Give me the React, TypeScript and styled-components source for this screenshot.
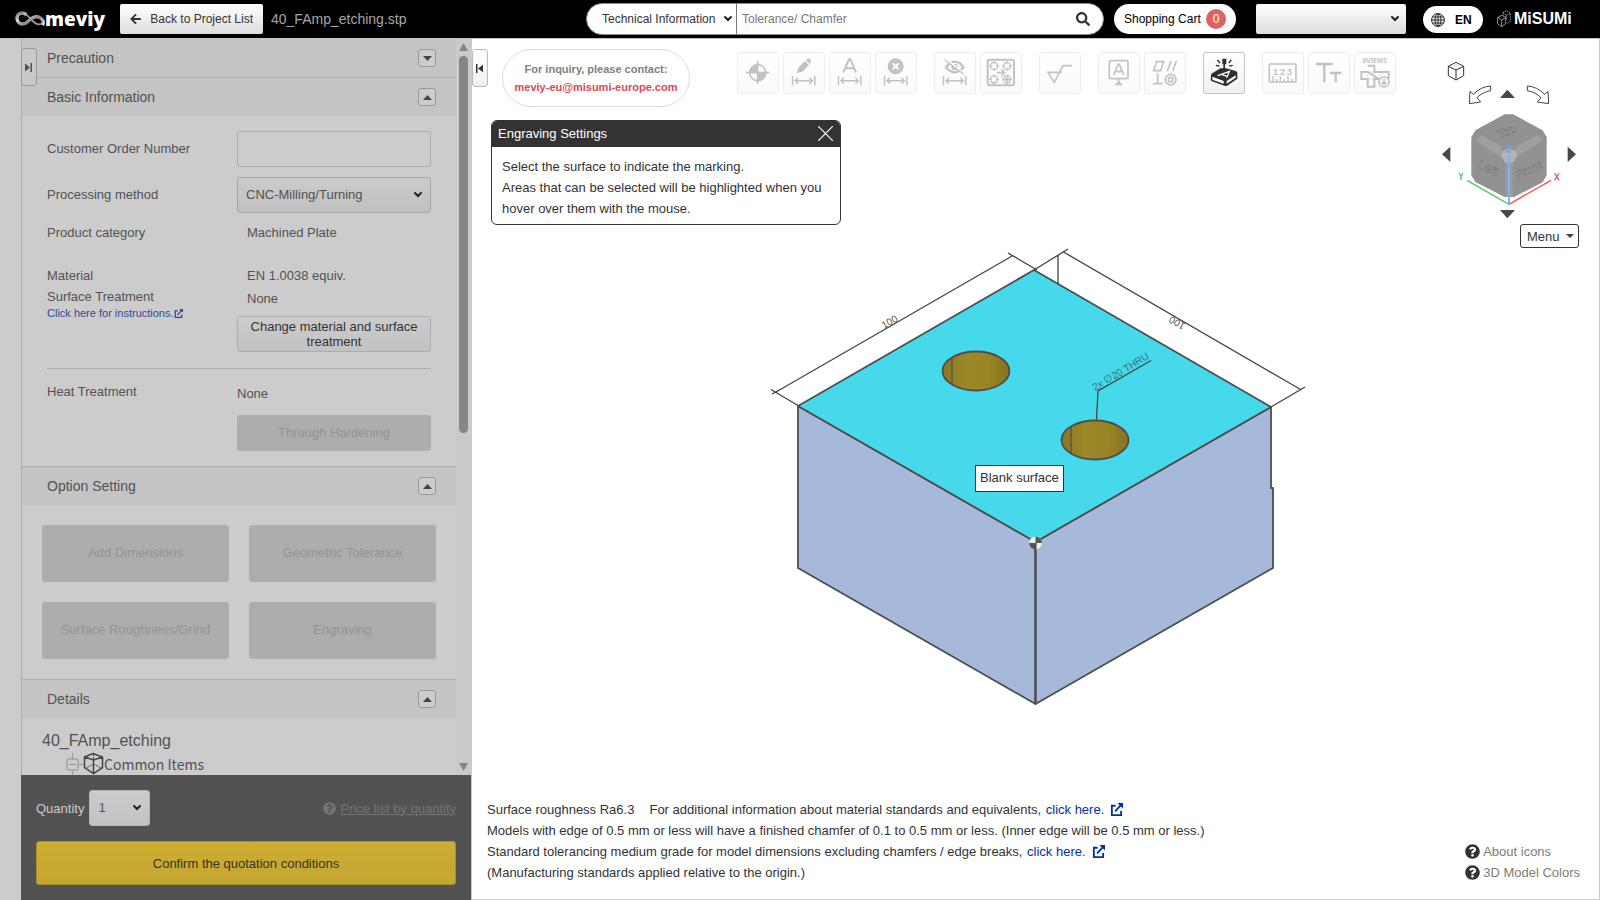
import React from "react";
import styled, { createGlobalStyle, css } from "styled-components";
import { FaSearch, FaArrowLeft, FaQuestionCircle } from "react-icons/fa";

const GlobalStyle = createGlobalStyle`
  *, *::before, *::after { box-sizing: border-box; }
  body {
    margin: 0;
    font: 13px/21px "Liberation Sans", Arial, sans-serif;
    color: #333;
    background: #fff;
  }
  button, input, select { font: inherit; color: inherit; margin: 0; }
  a { color: #003399; text-decoration: none; }
`;

/* ---------- shell ---------- */

const Shell = styled.div`
  display: flex;
  flex-direction: column;
  height: 100vh;
  min-width: 1400px;
`;

const Header = styled.header`
  display: flex;
  align-items: center;
  justify-content: space-between;
  height: 39px;
  flex: none;
  padding: 0 29px 0 15px;
  background: #000;
  border-bottom: 1px solid #c4c4c4;
  font-size: 12px;
`;

const HeaderGroup = styled.div`
  display: flex;
  align-items: center;
`;

const Brand = styled.a`
  display: flex;
  align-items: center;
  width: 105px;
  color: #fff;
  font: 800 19px/24px "Open Sans", sans-serif;
  svg { flex: none; }
`;

const BackButton = styled.button`
  display: flex;
  align-items: center;
  gap: 9px;
  width: 143px;
  height: 30px;
  padding: 0 10px;
  border: 0;
  border-radius: 2px;
  background: linear-gradient(#fff, #ddd);
  white-space: nowrap;
  svg { font-size: 12px; }
`;

const FileName = styled.span`
  margin-left: 8px;
  font-size: 14px;
  color: #a6a6a6;
`;

const SearchBox = styled.form`
  display: flex;
  width: 518px;
  height: 32px;
  margin-right: 10px;
  background: #fff;
  border: 1px solid #8a8a8a;
  border-radius: 16px;
  overflow: hidden;
`;

const SelectWrap = styled.span<{ $arrowRight: number }>`
  position: relative;
  display: inline-flex;
  > svg {
    position: absolute;
    right: ${(p) => p.$arrowRight}px;
    top: 50%;
    margin-top: -4px;
    pointer-events: none;
  }
`;

const SearchSelect = styled.select`
  appearance: none;
  width: 150px;
  padding: 0 0 0 15px;
  border: 0;
  border-right: 1px solid #777;
  background: transparent;
`;

const SearchInput = styled.input`
  flex: 1;
  min-width: 0;
  border: 0;
  padding: 0 5px;
  background: transparent;
  &::placeholder { color: #777; opacity: 1; }
`;

const SearchButton = styled.button`
  width: 40px;
  border: 0;
  padding: 0;
  background: transparent;
  svg { display: block; margin: 0 auto; font-size: 14px; }
`;

const CartButton = styled.button`
  display: flex;
  align-items: center;
  justify-content: space-between;
  width: 122px;
  height: 30px;
  padding: 0 10px;
  margin-right: 20px;
  border: 0;
  border-radius: 15px;
  background: #fff;
  color: #000;
  white-space: nowrap;
`;

const CartCount = styled.span`
  width: 20px;
  height: 20px;
  border-radius: 10px;
  background: #e06161;
  color: #fff;
  line-height: 20px;
  text-align: center;
`;

const AccountSelect = styled.select`
  appearance: none;
  width: 150px;
  height: 30px;
  border: 0;
  border-radius: 2px;
  background: linear-gradient(#fff, #ddd);
`;

const LanguageButton = styled.button`
  display: flex;
  align-items: center;
  gap: 10px;
  width: 60px;
  height: 27px;
  margin: 1px 14px 0 17px;
  padding: 1px 8px 0;
  border: 0;
  border-radius: 14px;
  background: #fff;
  color: #000;
  font-weight: bold;
`;

const Misumi = styled.a`
  display: flex;
  align-items: center;
  gap: 3px;
  width: 74px;
  color: #fff;
  font: bold 16px/20px "Liberation Sans", sans-serif;
  svg { flex: none; }
`;

const Body = styled.div`
  display: flex;
  flex: 1;
  min-height: 0;
`;

/* ---------- sidebar ---------- */

const Sidebar = styled.aside`
  display: flex;
  flex-direction: column;
  flex: 0 0 471px;
  padding-left: 21px;
  background: #ccc;
  color: #525252;
  position: relative;
`;

const ScrollRegion = styled.div`
  display: flex;
  flex: 1;
  min-height: 0;
  overflow: hidden;
  border-left: 1px solid #adadad;
`;

const Sections = styled.div`
  flex: 1;
  min-width: 0;
`;

const ScrollTrack = styled.div`
  display: flex;
  flex-direction: column;
  align-items: center;
  width: 15px;
  padding: 4px 0;
  background: #cacaca;
  svg { flex: none; }
`;

const ScrollThumb = styled.div`
  width: 9px;
  height: 377px;
  margin: 5px 0 auto;
  border-radius: 5px;
  background: #858585;
`;

const Section = styled.section`
  & + & { border-top: 1px solid #adadad; }
`;

const SectionHead = styled.h2`
  display: flex;
  align-items: center;
  justify-content: space-between;
  height: 38px;
  margin: 0;
  padding: 0 20px 0 25px;
  background: #c4c4c4;
  font-size: 14px;
  font-weight: normal;
`;

const Toggle = styled.button`
  width: 18px;
  height: 18px;
  padding: 0;
  border: 1px solid #999;
  border-radius: 3px;
  background: #ccc;
  svg { display: block; margin: 0 auto; }
`;

const Form = styled.div`
  padding: 15px 25px;
`;

const Row = styled.div<{ $h?: number; $top?: number }>`
  display: grid;
  grid-template-columns: 190px 1fr;
  align-items: ${(p) => (p.$h ? "center" : "start")};
  ${(p) => p.$h && css`min-height: ${p.$h}px;`}
  margin-top: ${(p) => p.$top ?? 0}px;
  label { padding-bottom: 2px; }
`;

const Stack = styled.div<{ $top?: number }>`
  display: flex;
  flex-direction: column;
  padding-top: ${(p) => p.$top ?? 0}px;
`;

const Value = styled.span<{ $indent?: boolean }>`
  line-height: 23px;
  padding-left: ${(p) => (p.$indent ? 10 : 0)}px;
`;

const HelpLink = styled.a`
  display: flex;
  align-items: center;
  font-size: 11px;
  line-height: 12px;
  color: #2f4b91;
`;

const TextInput = styled.input`
  width: 100%;
  height: 36px;
  padding: 0 9px;
  border: 1px solid #adadad;
  border-radius: 3px;
  background: #ccc;
`;

const MethodSelect = styled.select`
  appearance: none;
  width: 194px;
  height: 36px;
  padding: 0 8px 2px;
  border: 1px solid #a6a6a6;
  border-radius: 3px;
  background: linear-gradient(#cbcbcb, #c0c0c0);
`;

const PlainButton = styled.button`
  height: 36px;
  margin-top: 6px;
  padding: 0 10px;
  border: 1px solid #adadad;
  border-radius: 3px;
  background: linear-gradient(#ccc, #c2c2c2);
  color: #333;
  line-height: 15px;
`;

const Rule = styled.hr`
  height: 1px;
  margin: 16px 0 0;
  border: 0;
  background: #adadad;
`;

const OptionButton = styled.button<{ $h: number; $top?: number }>`
  height: ${(p) => p.$h}px;
  margin-top: ${(p) => p.$top ?? 0}px;
  padding: 0 0 2px;
  border: 0;
  border-radius: 3px;
  background: #adadad;
  color: #939393;
`;

const OptionGrid = styled.div`
  display: grid;
  grid-template-columns: 1fr 1fr;
  gap: 20px;
  padding: 20px;
`;

const Details = styled.div`
  padding: 12px 20px 0;
`;

const PartName = styled.div`
  font-size: 16px;
  line-height: 22px;
`;

const TreeRow = styled.div`
  display: flex;
  align-items: center;
  height: 24px;
  padding-left: 24px;
  font: 14px/24px "Noto Sans CJK JP", "Noto Sans", sans-serif;
`;

const QuoteBar = styled.div`
  flex: none;
  height: 125px;
  padding: 15px;
  background: #525252;
  color: #ccc;
`;

const QuoteRow = styled.div`
  display: flex;
  align-items: center;
  justify-content: space-between;
  margin-bottom: 15px;
`;

const QuantityLabel = styled.label`
  display: flex;
  align-items: center;
  gap: 5px;
`;

const QuantitySelect = styled.select`
  appearance: none;
  width: 61px;
  height: 36px;
  padding: 0 8px 2px;
  border: 1px solid #b5b5b5;
  border-radius: 3px;
  background: linear-gradient(#ccc, #c2c2c2);
  color: #525252;
`;

const PriceLink = styled.a`
  display: flex;
  align-items: center;
  gap: 4px;
  color: #757575;
  span { text-decoration: underline; }
`;

const ConfirmButton = styled.button`
  width: 100%;
  height: 44px;
  border: 1px solid #a8902c;
  border-radius: 3px;
  background: linear-gradient(#ccae33, #c4a632);
  color: #333;
`;

const PanelHandle = styled.button<{ $dim?: boolean }>`
  position: absolute;
  top: ${(p) => (p.$dim ? 9 : 10)}px;
  left: ${(p) => (p.$dim ? 21 : 0)}px;
  width: 16px;
  height: 38px;
  padding: 0;
  border: 1px solid ${(p) => (p.$dim ? "#999" : "#bbb")};
  border-radius: 3px;
  background: ${(p) => (p.$dim ? "#c8c8c8" : "linear-gradient(#fff, #f0f0f0)")};
  color: ${(p) => (p.$dim ? "#525252" : "#333")};
  svg { display: block; margin: 0 auto; }
`;

/* ---------- viewer ---------- */

const Viewer = styled.main`
  position: relative;
  display: flex;
  flex-direction: column;
  flex: 1;
  min-width: 0;
  border: 1px solid #ccc;
  border-top: 0;
`;

const Upper = styled.div`
  display: flex;
  justify-content: space-between;
  height: 206px;
  padding: 10px 20px 0 19px;
`;

const TopRow = styled.div`
  display: flex;
  align-items: flex-start;
  padding-left: 11px;
`;

const Inquiry = styled.div`
  width: 188px;
  height: 58px;
  margin-right: 47px;
  padding-top: 10px;
  border: 1px solid #ddd;
  border-radius: 29px;
  font: bold 11px/18px "Liberation Sans", sans-serif;
  text-align: center;
  white-space: nowrap;
  color: #808080;
  a { display: block; color: #d64b55; }
`;

const Toolbar = styled.div`
  display: flex;
  gap: 17px;
  padding-top: 3px;
`;

const ToolGroup = styled.div`
  display: flex;
  gap: 4px;
`;

const ToolButton = styled.button<{ $active?: boolean }>`
  width: 42px;
  height: 42px;
  padding: 0;
  border: 1px solid ${(p) => (p.$active ? "#c6c6c6" : "#eee")};
  border-radius: 3px;
  background: ${(p) => (p.$active ? "linear-gradient(#fff, #f0f0f0)" : "linear-gradient(#fff, #fafafa)")};
  color: ${(p) => (p.$active ? "#2e2e2e" : "#c2c2c2")};
  svg { display: block; }
`;

const Dialog = styled.section`
  width: 350px;
  margin-top: 13px;
  border: 1px solid #333;
  border-radius: 6px;
  background: #fff;
  overflow: hidden;
`;

const DialogHead = styled.div`
  display: flex;
  align-items: center;
  justify-content: space-between;
  height: 26px;
  padding: 0 7px 2px 6px;
  background: #333;
  color: #fff;
`;

const CloseButton = styled.button`
  width: 15px;
  height: 15px;
  padding: 0;
  border: 0;
  background: transparent;
  svg { display: block; }
`;

const DialogText = styled.p`
  margin: 0;
  padding: 9px 10px 5px;
`;

const ViewControls = styled.div`
  display: flex;
  flex-direction: column;
  align-items: flex-end;
  padding-top: 11px;
  > svg { display: block; flex: none; }
`;

const MenuButton = styled.button`
  display: flex;
  align-items: center;
  justify-content: space-between;
  width: 59px;
  height: 24px;
  margin-top: 4px;
  padding: 0 4px 0 6px;
  border: 1px solid #333;
  border-radius: 3px;
  background: #fff;
  flex: none;
`;

const Stage = styled.div`
  display: flex;
  justify-content: center;
  flex: 1;
  min-height: 0;
`;

const Model = styled.div`
  position: relative;
  width: 561px;
  height: 465px;
  svg { display: block; }
`;

const SurfaceTip = styled.div`
  position: absolute;
  left: 220px;
  top: 220px;
  height: 27px;
  padding: 1px 4px;
  border: 1px solid #333;
  background: #fff;
  white-space: nowrap;
`;

const Footer = styled.footer`
  display: flex;
  align-items: flex-end;
  justify-content: space-between;
  padding: 0 19px 16px 15px;
`;

const Note = styled.p`
  margin: 0;
  a { margin-left: 1px; }
  svg { margin-left: 6px; vertical-align: -2px; }
`;

const Lead = styled.span`
  margin-right: 15px;
`;

const LegendLink = styled.a`
  display: flex;
  align-items: center;
  gap: 3px;
  color: #7d7d75;
  svg { color: #333; font-size: 15px; }
`;

/* ---------- drawings ---------- */

const Chevron = () => (
  <svg width="10" height="8" viewBox="0 0 10 8" aria-hidden="true">
    <path d="M2 2 L5 5 L8 2" fill="none" stroke="#222" strokeWidth="2" strokeLinecap="round" />
  </svg>
);

const Triangle = ({ up, w = 9, h = 5, fill = "#444" }: { up?: boolean; w?: number; h?: number; fill?: string }) => (
  <svg width={w} height={h} viewBox="0 0 10 6" preserveAspectRatio="none" aria-hidden="true">
    <path d={up ? "M0 6 L5 0 L10 6Z" : "M0 0 L5 6 L10 0Z"} fill={fill} />
  </svg>
);

const ExternalIcon = ({ size }: { size: number }) => (
  <svg width={size} height={size} viewBox="0 0 14 14" fill="none" stroke="currentColor" strokeWidth="2" aria-hidden="true">
    <path d="M6 3 H2 V13 H12 V8.500" />
    <path d="M5.500 9 L11.500 2.500" />
    <path d="M8 0 H14 V6 Z" fill="currentColor" stroke="none" />
  </svg>
);

const MeviyMark = () => (
  <svg width="30" height="16" viewBox="0 0 90 48" fill="none" aria-hidden="true">
    <defs>
      <linearGradient id="mark" x1="0" y1="0" x2="1" y2="1">
        <stop offset="0" stopColor="#777" />
        <stop offset=".3" stopColor="#dcd6dc" />
        <stop offset=".6" stopColor="#8a868a" />
        <stop offset="1" stopColor="#e0dde0" />
      </linearGradient>
    </defs>
    <path d="M20 6 C36 7 42 18 52 29 C62 40 74 42 84 37" stroke="#9a969a" strokeWidth="5" />
    <path d="M34 11 C20 0 5 9 6 23 C8 40 25 44 38 32 C52 19 66 13 77 21 C86 28 87 36 82 42" stroke="url(#mark)" strokeWidth="10" />
  </svg>
);

const MisumiMark = () => (
  <svg width="14" height="18" viewBox="0 0 42 54" fill="none" stroke="#aaa" strokeWidth="2.500" aria-hidden="true">
    <path d="M2 22 L14 16 L26 22 V40 L14 50 L2 42 Z M2 22 L14 30 L26 22 M14 30 V50" />
    <path d="M18 8 L28 2 L40 10 V34 L28 42 M18 8 L28 16 L40 10 M28 16 V30 M18 8 V18" strokeDasharray="5 2" />
  </svg>
);

const Globe = () => (
  <svg width="14" height="14" viewBox="0 0 14 14" fill="none" stroke="#222" aria-hidden="true">
    <circle cx="7" cy="7" r="6.400" />
    <ellipse cx="7" cy="7" rx="3" ry="6.400" />
    <path d="M7 .6 V13.400 M.6 7 H13.400 M1.500 4 H12.500 M1.500 10 H12.500" />
  </svg>
);

const HandleIcon = ({ flip }: { flip?: boolean }) => (
  <svg width="8" height="9" viewBox="0 0 8 9" fill="currentColor" aria-hidden="true">
    {flip ? <path d="M0 0 H1.500 V9 H0Z M2 4.500 L7 .8 V8.200Z" /> : <path d="M0 .5 L5 4.500 L0 8.500Z M5.500 0 H7 V9 H5.500Z" />}
  </svg>
);

const TreeBranch = () => (
  <svg width="38" height="24" viewBox="0 0 38 24" fill="none" aria-hidden="true">
    <path d="M6.500 1 V7 M6.500 19 V24 M13 12.500 H18" stroke="#999" />
    <rect x="1" y="7" width="11" height="11" rx="1.500" stroke="#8c8c8c" />
    <path d="M3.500 12.500 H9.500" stroke="#8c8c8c" />
    <path d="M18.500 5 L27 1.500 L36.500 5 V15.500 L27.500 21.500 L18.500 15.500 Z M18.500 5 L27.500 8 L36.500 5 M27.500 8 V21" stroke="#444" strokeWidth="1.500" />
    <path d="M27.500 2 V12 L20 16 M27.500 12 L35 16" stroke="#444" strokeDasharray="2 1" />
  </svg>
);

const Span = () => (
  <path d="M25.500 69 V97 M92.500 69 V97 M32 83 H87 M42 74 L33 83 L42 92 M76 74 L85 83 L76 92" fill="none" stroke="currentColor" strokeWidth="4.500" />
);

const Icon = ({ children }: { children: React.ReactNode }) => (
  <svg width="40" height="40" viewBox="0 0 120 120" fill="none" stroke="currentColor" strokeWidth="5" aria-hidden="true">
    {children}
  </svg>
);

const tools: { name: string; active?: boolean; icon: React.ReactNode }[][] = [
  [
    { name: "Origin", icon: <><circle cx="59" cy="59" r="24" /><path d="M59 24 V94 M24 59 H94" /><path d="M59 59 V35 A24 24 0 0 0 35 59Z M59 59 V83 A24 24 0 0 0 83 59Z" fill="currentColor" stroke="none" /></> },
    { name: "Edit dimension", icon: <><path d="M39 60 L43 44 L63 24 L75 36 L55 56Z M66 21 L71 17 Q75 15 79 19 Q83 23 80 27 L77 33Z" fill="currentColor" stroke="none" /><Span /></> },
    { name: "Dimension text", icon: <><path d="M40 58 L57 19 H61 L78 58 M46 46 H72" strokeWidth="6" /><Span /></> },
    { name: "Delete dimension", icon: <><circle cx="59" cy="40" r="24" fill="currentColor" stroke="none" /><path d="M50 31 L68 49 M68 31 L50 49" stroke="#fff" strokeWidth="6" /><Span /></> },
  ],
  [
    { name: "Hide dimension", icon: <><path d="M33 43 Q45 26 59 26 Q75 26 85 43 Q73 58 59 58 Q45 58 33 43Z" strokeWidth="7" /><circle cx="59" cy="42" r="10" fill="currentColor" stroke="none" /><path d="M33 18 L91 64" stroke="#fff" strokeWidth="5" /><path d="M29 20 L86 64" strokeWidth="3.500" /><Span /></> },
    { name: "Hole groups", icon: <><rect x="20" y="20" width="79" height="77" rx="7" strokeWidth="6" />{[[39, 39], [78, 39], [39, 79], [78, 79]].map(([x, y]) => <g key={x + "-" + y} strokeWidth="4"><circle cx={x} cy={y} r="11" /><path d={`M${x} ${y - 15} v10 M${x} ${y + 5} v10 M${x - 15} ${y} h10 M${x + 5} ${y} h10`} strokeWidth="3" /></g>)}<circle cx="78" cy="79" r="6" fill="currentColor" stroke="none" /><path d="M47 59 H70 M61 49 L71 59 L61 69" /></> },
  ],
  [{ name: "Surface roughness", icon: <path d="M66 58 H24 L43 88 L69 38 H97" /> }],
  [
    { name: "Datum", icon: <><rect x="31" y="23" width="56" height="54" rx="5" /><path d="M44 66 L57 34 H61 L74 66 M49 56 H69 M59 78 V88" /><path d="M46 97 L59 83 L72 97Z" fill="currentColor" stroke="none" /></> },
    { name: "Geometric tolerance", icon: <><path d="M35 26 H56 L47 53 H26Z M78 24 L67 55 M94 24 L83 55 M38 61 V92 M24 92 H53" /><circle cx="77" cy="80" r="16" /><circle cx="77" cy="80" r="7" /></> },
  ],
  [
    {
      name: "Engraving", active: true, icon: <>
        <path d="M21 68 Q20 64 25 61 L49 46 H66 L95 54 Q101 56 100 61 V77 L72 97 Q67 101 61 98 L24 85 Q20 83 20 78Z" fill="currentColor" stroke="none" />
        <path d="M25 71 L59 84 V92 L25 80Z M68 84 L95 67 V74 L68 92Z" fill="#fff" stroke="none" />
        <path d="M41 68 L76 55 L68 74 M53 65 L70 70" stroke="#fff" strokeWidth="4" />
        <path d="M55 17 H67 V34 H63 V49 H58 V34 H55Z" fill="currentColor" stroke="none" />
        <path d="M40 21 L48 30 M82 21 L74 30 M36 37 L46 39 M86 37 L76 39" strokeWidth="4" />
      </>,
    },
  ],
  [
    { name: "Measure", icon: <><rect x="19" y="33" width="80" height="54" rx="4" /><text x="61" y="66" textAnchor="middle" fontSize="28" fontWeight="bold" fontFamily="Liberation Sans" fill="currentColor" stroke="none" letterSpacing="5">123</text><path d="M30 86 V70 M41 86 V78 M52 86 V70 M63 86 V78 M75 86 V70 M87 86 V78" strokeWidth="4" /></> },
    { name: "Text size", icon: <path d="M21 33 H71 M46 33 V88 M63 60 H97 M80 60 V88" strokeWidth="7" /> },
    {
      name: "Six views", icon: <>
        <text x="59" y="30" textAnchor="middle" fontSize="20" fontWeight="bold" fontFamily="Noto Sans" fill="currentColor" stroke="none">6VIEWS</text>
        <path d="M38 38 H58 V57 H101 V78 M72 78 H58 V101 H38 V78 H19 V57 H38Z" strokeWidth="6" />
        <path d="M38 57 H58 V78 H38Z M79 57 V70" strokeWidth="2" strokeDasharray="4 2" />
        <circle cx="87" cy="87" r="15" fill="#fff" /><path d="M87 77 V95 M79 87 L87 95 L95 87" />
      </>,
    },
  ],
];

const ViewCube = () => (
  <svg width="139" height="160" viewBox="120 30 417 480" role="img" aria-label="View orientation">
    <path d="M145 49 L168 37 L191 49 V77 L168 90 L145 77 Z L168 60 L191 49 M168 60 V90" fill="none" stroke="#333" strokeWidth="3" />
    <path d="M272 108 V122 Q248 126 231 143 L242 156 L208 161 L210 124 L220 133 Q242 110 272 108Z" fill="#fff" stroke="#444" strokeWidth="3" />
    <path d="M382 108 V122 Q406 126 423 143 L412 156 L446 161 L444 124 L434 133 Q412 110 382 108Z" fill="#fff" stroke="#444" strokeWidth="3" />
    <path d="M300 144 L322 119 L345 144Z M300 480 L322 505 L345 480Z M151 290 L126 313 L151 336Z M503 290 L528 313 L503 336Z" fill="#484848" />
    <path d="M314 193 H340 L428 241 L440 262 V376 L428 397 L342 441 H314 L226 396 L214 376 V262 L226 241Z" fill="#929292" />
    <path d="M226 270 L240 254 L306 291 L304 322Z M428 270 L414 254 L346 291 L350 322Z" fill="#9f9f9f" />
    <path d="M316 340 H338 V441 H316Z" fill="#9c9c9c" />
    <path d="M327 295 L348 304 L352 318 L339 338 H315 L303 318 L308 304Z" fill="#b4b4b4" />
    <g fontFamily="Liberation Sans" fontSize="37" fill="#bcbcbc" stroke="#6c6c6c" strokeWidth="1.500">
      <text transform="translate(297 268) rotate(-24)">Top</text>
      <text transform="translate(232 353) rotate(24)">Left</text>
      <text transform="translate(354 387) rotate(-24)" fontSize="35">Front</text>
    </g>
    <path d="M327 463 L201 391" stroke="#49cf69" strokeWidth="4" />
    <path d="M327 463 L453 391" stroke="#f4555a" strokeWidth="4" />
    <path d="M327 463 V318" stroke="#75b4f4" strokeWidth="6" />
    <path d="M177 369 L183 379 L189 369 M183 379 V391" fill="none" stroke="#49cf69" strokeWidth="4" />
    <path d="M464 369 L477 391 M477 369 L464 391" stroke="#f4555a" strokeWidth="4" />
    <path d="M320 288 H334 L320 306 H334" fill="none" stroke="#5fa8f5" strokeWidth="4" />
  </svg>
);

const Hole = ({ cx, cy }: { cx: number; cy: number }) => (
  <g stroke="#4d4d4d">
    <ellipse cx={cx} cy={cy} rx="33.500" ry="19.500" fill="url(#bore)" strokeWidth="1.800" />
    <path d={`M${cx - 24} ${cy - 14} V${cy + 14}`} strokeWidth="1.200" />
  </g>
);

const PartDrawing = () => (
  <svg width="561" height="465" viewBox="755 245 561 465" role="img" aria-label="Plate with two through holes">
    <defs>
      <linearGradient id="bore">
        <stop offset="0" stopColor="#8a7820" />
        <stop offset=".35" stopColor="#9c8828" />
        <stop offset=".7" stopColor="#998526" />
        <stop offset="1" stopColor="#84721e" />
      </linearGradient>
    </defs>
    <g stroke="#4d4d4d" strokeWidth="1.800" strokeLinejoin="round">
      <path d="M798 406 L1035.500 542 V704 L798 568Z" fill="#a7b9da" />
      <path d="M1271 407 V488 H1273 V568 L1035.500 704 V542Z" fill="#a7b9da" />
      <path d="M1034 270 L1271 407 L1035.500 542 L798 406Z" fill="#46d9ec" />
    </g>
    <path d="M771 389.500 L798 405.500 M1008 253 L1037 270 M776 392 L1013 255.500 M772 394 L781 389 M1068 249 L1034 270 M1305 387 L1271 407 M1063.500 252 L1301.500 390 M1058 255 V284" fill="none" stroke="#444" strokeWidth="1.300" />
    <Hole cx={976} cy={371} />
    <Hole cx={1095} cy={440} />
    <path d="M1096.500 420 L1098 391 L1151 360.500" fill="none" stroke="#444" strokeWidth="1.300" />
    <g fontFamily="Liberation Sans" fontSize="10" fill="#555">
      <text transform="translate(884 329) rotate(-30)">100</text>
      <text transform="translate(1186 324) rotate(210)">100</text>
      <text transform="translate(1095 391) rotate(-31)" fill="#3b6f78">2x ∅20 THRU</text>
    </g>
    <circle cx="1035.500" cy="543" r="6.500" fill="#eee" />
    <path d="M1035.500 543 V536.500 A6.500 6.500 0 0 1 1042 543Z M1035.500 543 V549.500 A6.500 6.500 0 0 1 1029 543Z" fill="#555" />
    <path d="M1035.500 543 V704" stroke="#4d4d4d" strokeWidth="2" />
  </svg>
);

/* ---------- page ---------- */

const PanelSection = ({ title, open = true, children }: { title: string; open?: boolean; children?: React.ReactNode }) => (
  <Section>
    <SectionHead>
      {title}
      <Toggle type="button" aria-label={`Toggle ${title}`} aria-expanded={open}><Triangle up={open} /></Toggle>
    </SectionHead>
    {children}
  </Section>
);

export default function App() {
  return (
    <Shell>
      <GlobalStyle />
      <Header>
        <HeaderGroup>
          <Brand href="#"><MeviyMark />meviy</Brand>
          <BackButton type="button"><FaArrowLeft />Back to Project List</BackButton>
          <FileName>40_FAmp_etching.stp</FileName>
        </HeaderGroup>
        <HeaderGroup>
          <SearchBox role="search" onSubmit={(e) => e.preventDefault()}>
            <SelectWrap $arrowRight={4}>
              <SearchSelect aria-label="Search category"><option>Technical Information</option></SearchSelect>
              <Chevron />
            </SelectWrap>
            <SearchInput type="text" placeholder="Tolerance/ Chamfer" aria-label="Search" />
            <SearchButton aria-label="Search"><FaSearch /></SearchButton>
          </SearchBox>
          <CartButton type="button">Shopping Cart<CartCount>0</CartCount></CartButton>
          <SelectWrap $arrowRight={6}>
            <AccountSelect aria-label="Account"><option></option></AccountSelect>
            <Chevron />
          </SelectWrap>
          <LanguageButton type="button"><Globe />EN</LanguageButton>
          <Misumi href="#"><MisumiMark />MiSUMi</Misumi>
        </HeaderGroup>
      </Header>

      <Body>
        <Sidebar>
          <ScrollRegion>
            <Sections>
              <PanelSection title="Precaution" open={false} />
              <PanelSection title="Basic Information">
                <Form>
                  <Row $h={36}>
                    <label htmlFor="order">Customer Order Number</label>
                    <TextInput id="order" type="text" />
                  </Row>
                  <Row $h={36} $top={10}>
                    <label htmlFor="method">Processing method</label>
                    <SelectWrap $arrowRight={8}>
                      <MethodSelect id="method"><option>CNC-Milling/Turning</option></MethodSelect>
                      <Chevron />
                    </SelectWrap>
                  </Row>
                  <Row $h={39}>
                    <span>Product category</span>
                    <Value $indent>Machined Plate</Value>
                  </Row>
                  <Row $top={12}>
                    <Stack $top={1}>
                      <span>Material</span>
                      <span>Surface Treatment</span>
                      <HelpLink href="#">Click here for instructions.<ExternalIcon size={9} /></HelpLink>
                    </Stack>
                    <Stack>
                      <Value $indent>EN 1.0038 equiv.</Value>
                      <Value $indent>None</Value>
                      <PlainButton type="button">Change material and surface treatment</PlainButton>
                    </Stack>
                  </Row>
                  <Rule />
                  <Row $top={12}>
                    <span>Heat Treatment</span>
                    <Stack $top={1}>
                      <Value>None</Value>
                      <OptionButton type="button" $h={36} $top={10} disabled>Through Hardening</OptionButton>
                    </Stack>
                  </Row>
                </Form>
              </PanelSection>
              <PanelSection title="Option Setting">
                <OptionGrid>
                  {["Add Dimensions", "Geometric Tolerance", "Surface Roughness/Grind", "Engraving"].map((t) => (
                    <OptionButton key={t} type="button" $h={57} disabled>{t}</OptionButton>
                  ))}
                </OptionGrid>
              </PanelSection>
              <PanelSection title="Details">
                <Details>
                  <PartName>40_FAmp_etching</PartName>
                  <TreeRow><TreeBranch />Common Items</TreeRow>
                </Details>
              </PanelSection>
            </Sections>
            <ScrollTrack aria-hidden="true">
              <Triangle up w={9} h={8} fill="#858585" />
              <ScrollThumb />
              <Triangle w={9} h={8} fill="#858585" />
            </ScrollTrack>
          </ScrollRegion>
          <QuoteBar>
            <QuoteRow>
              <QuantityLabel>
                Quantity
                <SelectWrap $arrowRight={8}>
                  <QuantitySelect><option>1</option></QuantitySelect>
                  <Chevron />
                </SelectWrap>
              </QuantityLabel>
              <PriceLink href="#"><FaQuestionCircle /><span>Price list by quantity</span></PriceLink>
            </QuoteRow>
            <ConfirmButton type="button">Confirm the quotation conditions</ConfirmButton>
          </QuoteBar>
          <PanelHandle type="button" $dim aria-label="Expand panel"><HandleIcon /></PanelHandle>
        </Sidebar>

        <Viewer>
          <PanelHandle type="button" aria-label="Collapse panel"><HandleIcon flip /></PanelHandle>
          <Upper>
            <div>
              <TopRow>
                <Inquiry>
                  For inquiry, please contact:
                  <a href="mailto:meviy-eu@misumi-europe.com">meviy-eu@misumi-europe.com</a>
                </Inquiry>
                <Toolbar role="toolbar">
                  {tools.map((group, i) => (
                    <ToolGroup key={i}>
                      {group.map((t) => (
                        <ToolButton key={t.name} type="button" aria-label={t.name} $active={t.active}><Icon>{t.icon}</Icon></ToolButton>
                      ))}
                    </ToolGroup>
                  ))}
                </Toolbar>
              </TopRow>
              <Dialog aria-label="Engraving Settings">
                <DialogHead>
                  Engraving Settings
                  <CloseButton type="button" aria-label="Close">
                    <svg width="15" height="15" viewBox="0 0 15 15" stroke="#fff" strokeWidth="1.200"><path d="M0 0 L15 15 M15 0 L0 15" /></svg>
                  </CloseButton>
                </DialogHead>
                <DialogText>
                  Select the surface to indicate the marking.<br />
                  Areas that can be selected will be highlighted when you hover over them with the mouse.
                </DialogText>
              </Dialog>
            </div>
            <ViewControls>
              <ViewCube />
              <MenuButton type="button">Menu<Triangle w={8} h={4} /></MenuButton>
            </ViewControls>
          </Upper>
          <Stage>
            <Model>
              <PartDrawing />
              <SurfaceTip role="tooltip">Blank surface</SurfaceTip>
            </Model>
          </Stage>
          <Footer>
            <div>
              <Note>
                <Lead>Surface roughness Ra6.3</Lead>For additional information about material standards and equivalents,{" "}
                <a href="#">click here.<ExternalIcon size={13} /></a>
              </Note>
              <Note>Models with edge of 0.5 mm or less will have a finished chamfer of 0.1 to 0.5 mm or less. (Inner edge will be 0.5 mm or less.)</Note>
              <Note>
                Standard tolerancing medium grade for model dimensions excluding chamfers / edge breaks,{" "}
                <a href="#">click here.<ExternalIcon size={13} /></a>
              </Note>
              <Note>(Manufacturing standards applied relative to the origin.)</Note>
            </div>
            <div>
              <LegendLink href="#"><FaQuestionCircle />About icons</LegendLink>
              <LegendLink href="#"><FaQuestionCircle />3D Model Colors</LegendLink>
            </div>
          </Footer>
        </Viewer>
      </Body>
    </Shell>
  );
}
